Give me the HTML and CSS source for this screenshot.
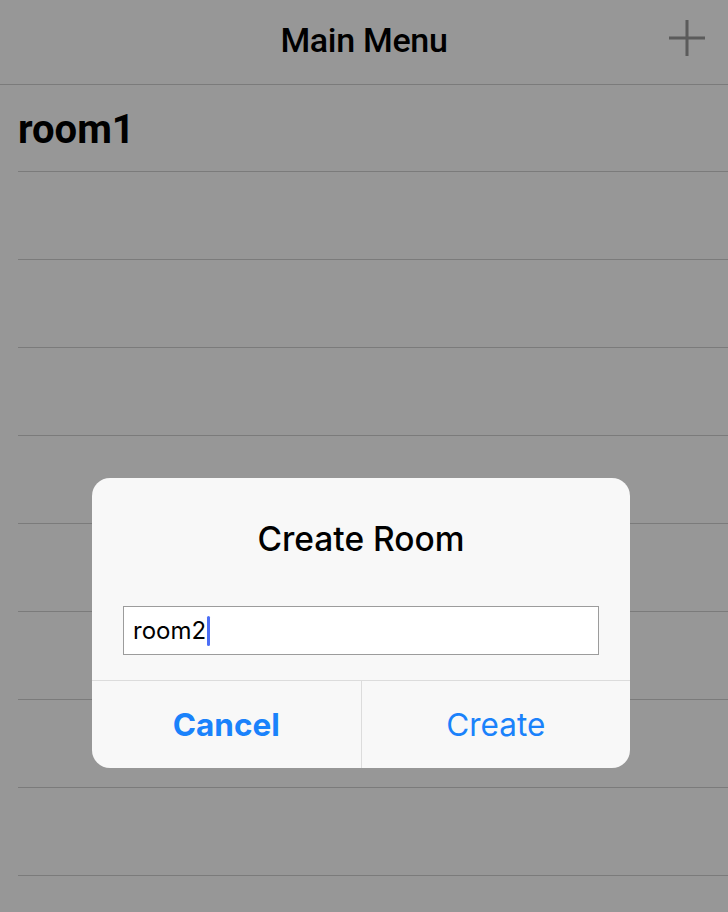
FILE: index.html
```html
<!DOCTYPE html>
<html>
<head>
<meta charset="utf-8">
<link rel="stylesheet" href="styles.css">
</head>
<body>
<div class="screen">
  <header class="nav">
    <div class="nav-title">Main Menu</div>
    <svg class="nav-add" width="36" height="36" viewBox="0 0 36 36"><path d="M18 0V36M0 18H36" stroke="#5b5b5b" stroke-width="3"/></svg>
  </header>
  <ul class="list">
    <li class="row first"><span class="row-label">room1</span></li>
    <li class="row"></li>
    <li class="row"></li>
    <li class="row"></li>
    <li class="row"></li>
    <li class="row"></li>
    <li class="row"></li>
    <li class="row"></li>
    <li class="row"></li>
    <li class="row"></li>
  </ul>
  <div class="alert">
    <div class="alert-title">Create Room</div>
    <div class="alert-field"><span class="field-text">room2</span><span class="caret"></span></div>
    <div class="alert-actions">
      <div class="action cancel">Cancel</div>
      <div class="action create">Create</div>
    </div>
  </div>
</div>
</body>
</html>
```
FILE: styles.css
```css
html, body {
  margin: 0;
  padding: 0;
}
body {
  width: 728px;
  height: 912px;
  overflow: hidden;
  background: #979797;
  font-family: Roboto, "Liberation Sans", sans-serif;
}
.screen {
  position: relative;
  width: 728px;
  height: 912px;
  overflow: hidden;
}
.nav {
  position: relative;
  height: 84px;
  border-bottom: 1px solid #7b7b7b;
  display: flex;
  align-items: center;
  justify-content: center;
}
.nav-title {
  font-size: 34px;
  font-weight: 500;
  letter-spacing: -0.3px;
  color: #000;
  margin-top: -4px;
}
.nav-add {
  position: absolute;
  right: 23px;
  top: 20px;
}
.list {
  list-style: none;
  margin: 0;
  padding: 0 0 0 18px;
}
.row {
  box-sizing: border-box;
  height: 88px;
  border-bottom: 1px solid #7b7b7b;
  display: flex;
  align-items: center;
}
.row.first {
  height: 87px;
}
.row-label {
  font-size: 40px;
  font-weight: 700;
  color: #000;
  margin-top: 2px;
}
.alert {
  position: absolute;
  left: 92px;
  top: 478px;
  width: 538px;
  height: 290px;
  background: #f8f8f8;
  border-radius: 18px;
  display: flex;
  flex-direction: column;
  overflow: hidden;
  font-family: Inter, Roboto, sans-serif;
}
.alert-title {
  height: 128px;
  box-sizing: border-box;
  padding-top: 42px;
  text-align: center;
  font-size: 33.5px;
  font-weight: 500;
  color: #000;
  line-height: 38px;
}
.alert-field {
  margin: 0 31px 0 31px;
  height: 49px;
  box-sizing: border-box;
  background: #fff;
  border: 1px solid #9c9c9c;
  display: flex;
  align-items: center;
  padding-left: 9px;
}
.field-text {
  font-size: 24px;
  color: #000;
}
.caret {
  width: 3px;
  height: 30px;
  border-radius: 2px;
  background: #4c6ef5;
  margin-left: 1px;
}
.alert-actions {
  margin-top: 25px;
  flex: 1;
  display: flex;
  border-top: 1px solid #dcdcdc;
}
.action {
  flex: 1;
  display: flex;
  align-items: center;
  justify-content: center;
  font-size: 31.5px;
  color: #1a82fb;
}
.cancel {
  font-weight: 700;
  border-right: 1px solid #dcdcdc;
}
.create {
  font-weight: 400;
}
```
